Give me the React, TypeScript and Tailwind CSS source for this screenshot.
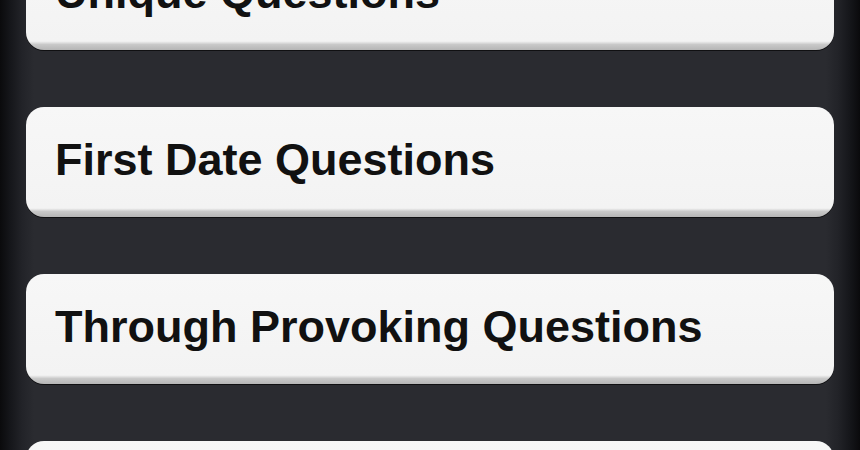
const items = [
    'Unique Questions',
    'First Date Questions',
    'Through Provoking Questions',
    '',
];

const QuestionCard = ({ label }: { label: string }) => (
    <div className="h-[110px] shrink-0 rounded-[18px] bg-[linear-gradient(to_bottom,#f7f7f7_0%,#f3f3f3_92%,#c9c9c9_95%,#b5b5b5_100%)] shadow-[0_1px_0_#101012] pl-[29px] pt-[30px]">
        {label && (
            <span className="block text-[45px] leading-[45px] font-bold text-[#111] font-['Liberation_Sans',Arial,sans-serif]">
                {label}
            </span>
        )}
    </div>
);

export default function App() {
    return (
        <div className="w-[860px] h-[450px] overflow-hidden bg-[linear-gradient(to_right,#0a0a0c_0px,#15161a_10px,#222328_22px,#2a2b30_34px,#2a2b30_826px,#222328_838px,#15161a_850px,#0a0a0c_860px)]">
            <div className="flex flex-col gap-[57px] mt-[-60px] pl-[26px] pr-[26px]">
                {items.map((item, i) => (
                    <QuestionCard key={i} label={item} />
                ))}
            </div>
        </div>
    );
}
